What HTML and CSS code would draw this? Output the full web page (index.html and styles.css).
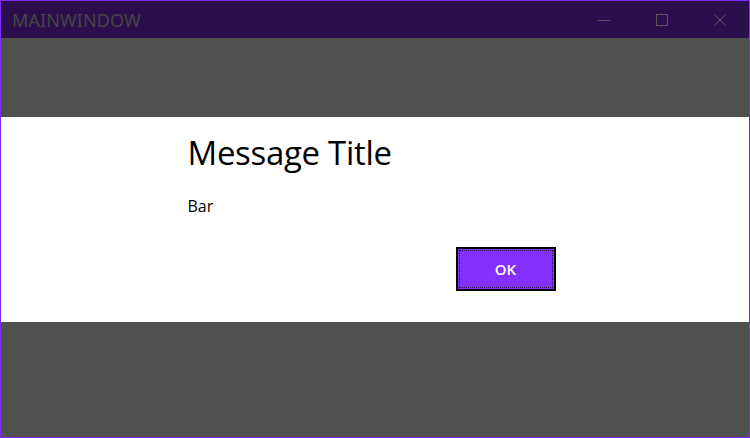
FILE: index.html
```html
<!DOCTYPE html>
<html>
<head>
<meta charset="utf-8">
<link rel="stylesheet" href="styles.css">
</head>
<body>
<div class="window">
  <div class="titlebar">
    <div class="app-title">MAINWINDOW</div>
    <div class="caption-buttons">
      <div class="cap-btn">
        <svg width="12" height="12" viewBox="0 0 12 12"><line x1="0" y1="6.5" x2="12" y2="6.5" stroke="#5b5463" stroke-width="1"/></svg>
      </div>
      <div class="cap-btn">
        <svg width="12" height="12" viewBox="0 0 12 12"><rect x="0.5" y="0.5" width="11" height="11" fill="none" stroke="#5b5463" stroke-width="1"/></svg>
      </div>
      <div class="cap-btn">
        <svg width="12" height="12" viewBox="0 0 12 12"><path d="M0.5 0.5 L11.5 11.5 M11.5 0.5 L0.5 11.5" stroke="#5b5463" stroke-width="1"/></svg>
      </div>
    </div>
  </div>
  <div class="overlay">
    <div class="dialog">
      <div class="dialog-inner">
        <div class="dialog-title">Message Title</div>
        <div class="dialog-text">Bar</div>
        <div class="dialog-actions">
          <button class="ok-btn"><span class="focus">OK</span></button>
        </div>
      </div>
    </div>
  </div>
</div>
</body>
</html>
```

FILE: styles.css
```css
html, body {
  margin: 0;
  padding: 0;
  width: 750px;
  height: 438px;
  overflow: hidden;
}
body {
  font-family: "Open Sans", "Noto Sans", sans-serif;
}
.window {
  box-sizing: border-box;
  width: 750px;
  height: 438px;
  border: 1px solid #7d2cff;
  display: flex;
  flex-direction: column;
  background: #505050;
}
.titlebar {
  height: 37px;
  background: #2a0f4c;
  display: flex;
  align-items: center;
  justify-content: space-between;
  flex: none;
}
.app-title {
  padding-left: 11px;
  font-family: "Noto Sans", sans-serif;
  font-size: 18px;
  color: #454545;
  letter-spacing: 0.1px;
  line-height: 1;
  margin-top: 1px;
}
.caption-buttons {
  display: flex;
  height: 100%;
}
.cap-btn {
  width: 58px;
  display: flex;
  align-items: center;
  justify-content: center;
}
.cap-btn svg { display: block; }
.overlay {
  flex: 1;
  display: flex;
  flex-direction: column;
  padding-top: 79px;
}
.dialog {
  height: 205px;
  background: #ffffff;
  display: flex;
  justify-content: center;
}
.dialog-inner {
  width: 368px;
  padding-top: 16px;
  display: flex;
  flex-direction: column;
  margin-left: -7px;
}
.dialog-title {
  font-family: "Open Sans", sans-serif;
  font-size: 33px;
  line-height: 40px;
  color: #000;
  letter-spacing: -0.3px;
}
.dialog-text {
  margin-top: 22px;
  font-size: 16px;
  line-height: 22px;
  color: #000;
}
.dialog-actions {
  margin-top: 30px;
  display: flex;
  justify-content: flex-end;
}
.ok-btn {
  width: 100px;
  height: 44px;
  box-sizing: border-box;
  border: 2px solid #000;
  background: #8431fe;
  padding: 1px;
  margin: 0;
  display: flex;
  cursor: default;
}
.focus {
  flex: 1;
  border: 1px dotted #2a0f4c;
  display: flex;
  align-items: center;
  justify-content: center;
  color: #fff;
  font-family: "Open Sans", sans-serif;
  font-weight: 600;
  font-size: 15px;
}
```
